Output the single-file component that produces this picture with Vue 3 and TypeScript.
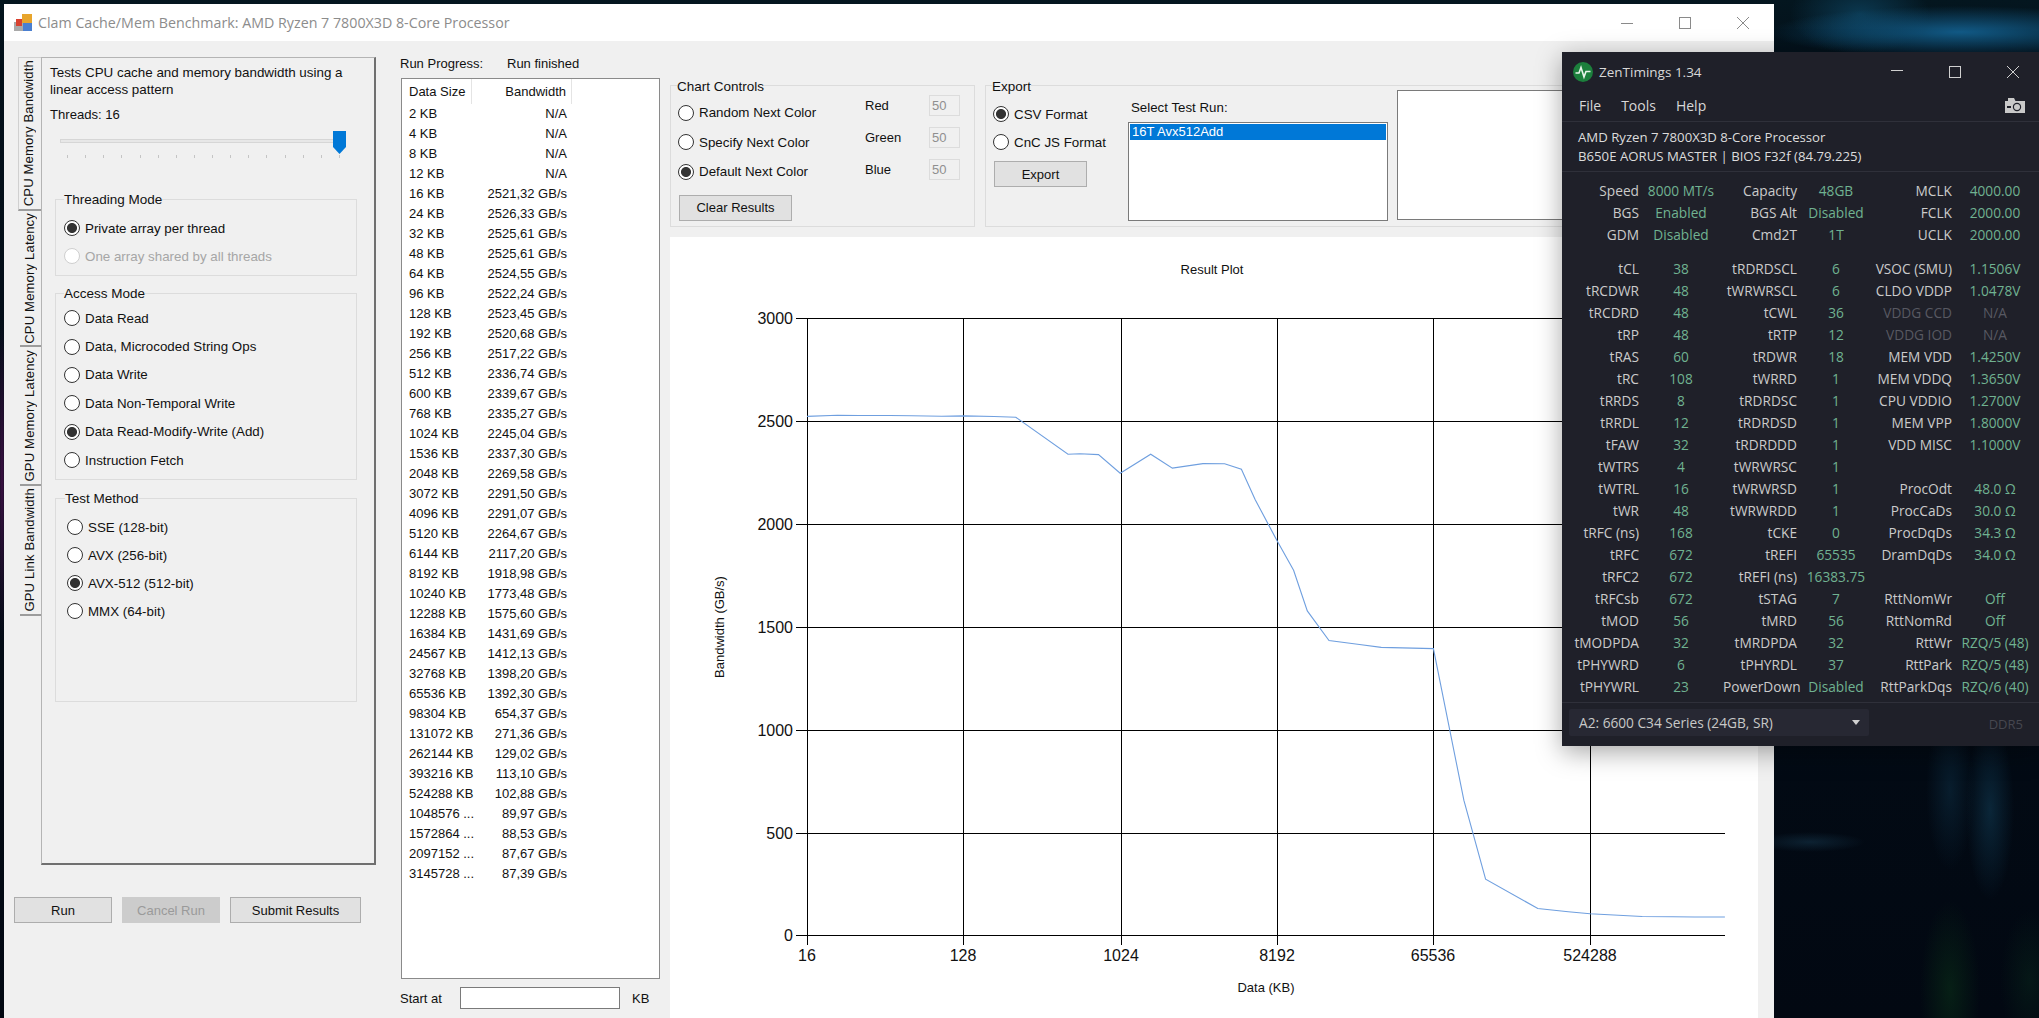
<script setup lang="ts">
import { computed } from 'vue'

interface Row { size: string; bw: string }
interface Option { label: string; on?: boolean; off?: boolean }
type Cell = [string, string, string?]

const tabs: { label: string; active?: boolean; h: number }[] = [
  { label: 'CPU Memory Bandwidth', active: true, h: 154 },
  { label: 'CPU Memory Latency', h: 136 },
  { label: 'GPU Memory Latency', h: 139 },
  { label: 'GPU Link Bandwidth', h: 130 }
]
const threading: Option[] = [
  { label: 'Private array per thread', on: true },
  { label: 'One array shared by all threads', off: true }
]
const access: Option[] = [
  { label: 'Data Read' },
  { label: 'Data, Microcoded String Ops' },
  { label: 'Data Write' },
  { label: 'Data Non-Temporal Write' },
  { label: 'Data Read-Modify-Write (Add)', on: true },
  { label: 'Instruction Fetch' }
]
const methods: Option[] = [
  { label: 'SSE (128-bit)' },
  { label: 'AVX (256-bit)' },
  { label: 'AVX-512 (512-bit)', on: true },
  { label: 'MMX (64-bit)' }
]
const colorModes: Option[] = [
  { label: 'Random Next Color' },
  { label: 'Specify Next Color' },
  { label: 'Default Next Color', on: true }
]
const formats: Option[] = [
  { label: 'CSV Format', on: true },
  { label: 'CnC JS Format' }
]
const channels = ['Red', 'Green', 'Blue']

const raw =
  '2 KB|N/A;4 KB|N/A;8 KB|N/A;12 KB|N/A;16 KB|2521,32;24 KB|2526,33;32 KB|2525,61;48 KB|2525,61;64 KB|2524,55;96 KB|2522,24;128 KB|2523,45;192 KB|2520,68;256 KB|2517,22;512 KB|2336,74;600 KB|2339,67;768 KB|2335,27;1024 KB|2245,04;1536 KB|2337,30;2048 KB|2269,58;3072 KB|2291,50;4096 KB|2291,07;5120 KB|2264,67;6144 KB|2117,20;8192 KB|1918,98;10240 KB|1773,48;12288 KB|1575,60;16384 KB|1431,69;24567 KB|1412,13;32768 KB|1398,20;65536 KB|1392,30;98304 KB|654,37;131072 KB|271,36;262144 KB|129,02;393216 KB|113,10;524288 KB|102,88;1048576 ...|89,97;1572864 ...|88,53;2097152 ...|87,67;3145728 ...|87,39'

const rows: Row[] = raw.split(';').map((r) => {
  const [size, v] = r.split('|')
  return { size, bw: v === 'N/A' ? v : v + ' GB/s' }
})

const X0 = 807
const XSTEP = 52.2
const Y0 = 935
const YSCALE = 0.2057

const points = computed(() =>
  rows
    .filter((r) => r.bw !== 'N/A')
    .map((r) => {
      const x = X0 + Math.log2(parseInt(r.size) / 16) * XSTEP
      const y = Y0 - parseFloat(r.bw.replace(',', '.')) * YSCALE
      return x.toFixed(1) + ',' + y.toFixed(1)
    })
    .join(' ')
)
const yTicks = [
  { label: '3000', y: 318 },
  { label: '2500', y: 421 },
  { label: '2000', y: 524 },
  { label: '1500', y: 627 },
  { label: '1000', y: 730 },
  { label: '500', y: 833 },
  { label: '0', y: 935 }
]
const xTicks = [
  { label: '16', x: 807 },
  { label: '128', x: 963 },
  { label: '1024', x: 1121 },
  { label: '8192', x: 1277 },
  { label: '65536', x: 1433 },
  { label: '524288', x: 1590 }
]

const zt1: Cell[] = [
  ['Speed', '8000 MT/s'], ['Capacity', '48GB'], ['MCLK', '4000.00'],
  ['BGS', 'Enabled'], ['BGS Alt', 'Disabled'], ['FCLK', '2000.00'],
  ['GDM', 'Disabled'], ['Cmd2T', '1T'], ['UCLK', '2000.00']
]
const zt2: Cell[] = [
  ['tCL', '38'], ['tRDRDSCL', '6'], ['VSOC (SMU)', '1.1506V'],
  ['tRCDWR', '48'], ['tWRWRSCL', '6'], ['CLDO VDDP', '1.0478V'],
  ['tRCDRD', '48'], ['tCWL', '36'], ['VDDG CCD', 'N/A', 'dim'],
  ['tRP', '48'], ['tRTP', '12'], ['VDDG IOD', 'N/A', 'dim'],
  ['tRAS', '60'], ['tRDWR', '18'], ['MEM VDD', '1.4250V'],
  ['tRC', '108'], ['tWRRD', '1'], ['MEM VDDQ', '1.3650V'],
  ['tRRDS', '8'], ['tRDRDSC', '1'], ['CPU VDDIO', '1.2700V'],
  ['tRRDL', '12'], ['tRDRDSD', '1'], ['MEM VPP', '1.8000V'],
  ['tFAW', '32'], ['tRDRDDD', '1'], ['VDD MISC', '1.1000V'],
  ['tWTRS', '4'], ['tWRWRSC', '1'], ['', ''],
  ['tWTRL', '16'], ['tWRWRSD', '1'], ['ProcOdt', '48.0 Ω'],
  ['tWR', '48'], ['tWRWRDD', '1'], ['ProcCaDs', '30.0 Ω'],
  ['tRFC (ns)', '168'], ['tCKE', '0'], ['ProcDqDs', '34.3 Ω'],
  ['tRFC', '672'], ['tREFI', '65535'], ['DramDqDs', '34.0 Ω'],
  ['tRFC2', '672'], ['tREFI (ns)', '16383.75'], ['', ''],
  ['tRFCsb', '672'], ['tSTAG', '7'], ['RttNomWr', 'Off'],
  ['tMOD', '56'], ['tMRD', '56'], ['RttNomRd', 'Off'],
  ['tMODPDA', '32'], ['tMRDPDA', '32'], ['RttWr', 'RZQ/5 (48)'],
  ['tPHYWRD', '6'], ['tPHYRDL', '37'], ['RttPark', 'RZQ/5 (48)'],
  ['tPHYWRL', '23'], ['PowerDown', 'Disabled'], ['RttParkDqs', 'RZQ/6 (40)']
]
</script>

<template>
  <div class="desktop">
    <section class="win">
      <header class="titlebar">
        <svg class="appicon" width="18" height="17" viewBox="0 0 18 17">
          <rect x="0" y="8" width="9" height="9" fill="#a9a9a9" />
          <rect x="8" y="0" width="10" height="9" fill="#e8a52c" />
          <rect x="2" y="5" width="6" height="7" fill="#d8412f" />
          <rect x="9" y="9" width="9" height="8" fill="#4a7fd0" />
        </svg>
        <span class="wintitle">Clam Cache/Mem Benchmark: AMD Ryzen 7 7800X3D 8-Core Processor</span>
        <div class="caps">
          <svg width="12" height="12" viewBox="0 0 12 12"><path d="M0 6.5H12" stroke="#8a8a8a" /></svg>
          <svg width="12" height="12" viewBox="0 0 12 12"><rect x=".5" y=".5" width="11" height="11" fill="none" stroke="#8a8a8a" /></svg>
          <svg width="12" height="12" viewBox="0 0 12 12"><path d="M0 0L12 12M12 0L0 12" stroke="#8a8a8a" /></svg>
        </div>
      </header>

      <div class="winbody">
        <div class="leftcol">
          <div class="tabrow">
            <div class="tabstrip">
              <div
                v-for="t in tabs"
                :key="t.label"
                class="tab"
                :class="{ active: t.active }"
                :style="{ height: t.h + 'px' }"
              >
                <span class="tablabel">{{ t.label }}</span>
              </div>
            </div>
            <div class="panel">
              <p class="desc">Tests CPU cache and memory bandwidth using a<br />linear access pattern</p>
              <p class="threads">Threads: 16</p>
              <div class="slider">
                <div class="track"></div>
                <div class="ticks"><i v-for="n in 16" :key="n"></i></div>
                <svg class="thumb" width="13" height="23" viewBox="0 0 13 23"><path d="M0 0H13V16L6.5 23L0 16Z" fill="#0078d7" /></svg>
              </div>

              <div class="group g-thread">
                <span class="legend">Threading Mode</span>
                <label v-for="o in threading" :key="o.label" class="opt" :class="{ off: o.off }">
                  <span class="radio" :class="{ on: o.on }"></span>{{ o.label }}
                </label>
              </div>
              <div class="group g-access">
                <span class="legend">Access Mode</span>
                <label v-for="o in access" :key="o.label" class="opt">
                  <span class="radio" :class="{ on: o.on }"></span>{{ o.label }}
                </label>
              </div>
              <div class="group g-method">
                <span class="legend">Test Method</span>
                <label v-for="o in methods" :key="o.label" class="opt">
                  <span class="radio" :class="{ on: o.on }"></span>{{ o.label }}
                </label>
              </div>
            </div>
          </div>
          <div class="runbtns">
            <button class="btn w98">Run</button>
            <button class="btn w98 disabled">Cancel Run</button>
            <button class="btn w131">Submit Results</button>
          </div>
        </div>

        <div class="midcol">
          <div class="progress"><span class="plabel">Run Progress:</span><span>Run finished</span></div>
          <div class="list">
            <div class="lrow lhead">
              <span class="c1">Data Size</span><span class="c2">Bandwidth</span>
            </div>
            <div v-for="r in rows" :key="r.size" class="lrow">
              <span class="c1">{{ r.size }}</span><span class="c2">{{ r.bw }}</span>
            </div>
          </div>
          <div class="startat">
            <span class="salabel">Start at</span>
            <span class="field"></span>
            <span class="kb">KB</span>
          </div>
        </div>

        <div class="rightcol">
          <div class="controls">
            <div class="group g-chart">
              <span class="legend">Chart Controls</span>
              <div class="cc-body">
                <div class="cc-left">
                  <label v-for="o in colorModes" :key="o.label" class="opt">
                    <span class="radio" :class="{ on: o.on }"></span>{{ o.label }}
                  </label>
                  <button class="btn clear">Clear Results</button>
                </div>
                <div class="cc-right">
                  <template v-for="c in channels" :key="c">
                    <span class="chan">{{ c }}</span>
                    <span class="num">50</span>
                  </template>
                </div>
              </div>
            </div>
            <div class="group g-export">
              <span class="legend">Export</span>
              <div class="ex-body">
                <div class="ex-left">
                  <label v-for="o in formats" :key="o.label" class="opt">
                    <span class="radio" :class="{ on: o.on }"></span>{{ o.label }}
                  </label>
                  <button class="btn export">Export</button>
                </div>
                <div class="ex-mid">
                  <div class="sel-label">Select Test Run:</div>
                  <div class="listbox"><div class="selected">16T Avx512Add</div></div>
                </div>
                <div class="blank"></div>
              </div>
            </div>
          </div>

          <div class="chart">
            <svg width="1088" height="781" viewBox="670 237 1088 781" class="plot">
              <text x="1212" y="274" text-anchor="middle" class="t13">Result Plot</text>
              <g stroke="#000" stroke-width="1" shape-rendering="crispEdges">
                <line v-for="t in yTicks" :key="t.label" x1="796" :y1="t.y + 0.5" x2="1725" :y2="t.y + 0.5" />
                <line v-for="t in xTicks" :key="t.label" :x1="t.x + 0.5" y1="318" :x2="t.x + 0.5" y2="945" />
              </g>
              <polyline :points="points" fill="none" stroke="#6f9fdf" stroke-width="1.1" />
              <text v-for="t in yTicks" :key="t.label" x="793" :y="t.y + 6" text-anchor="end" class="t16">{{ t.label }}</text>
              <text v-for="t in xTicks" :key="t.label" :x="t.x" y="961" text-anchor="middle" class="t16">{{ t.label }}</text>
              <text x="1266" y="992" text-anchor="middle" class="t13">Data (KB)</text>
              <text transform="translate(724 627) rotate(-90)" text-anchor="middle" class="t13">Bandwidth (GB/s)</text>
            </svg>
          </div>
        </div>
      </div>
    </section>

    <section class="zt">
      <header class="zt-title">
        <svg class="zt-logo" width="20" height="20" viewBox="0 0 20 20">
          <circle cx="10" cy="10" r="10" fill="#1c7f3c" />
          <path d="M2.5 11H6L8 5.5L11 15L13 9.5H17.5" fill="none" stroke="#e8f5ea" stroke-width="1.6" />
        </svg>
        <span class="zt-name">ZenTimings 1.34</span>
        <div class="zt-caps">
          <svg width="12" height="12" viewBox="0 0 12 12"><path d="M0 4.5H12" stroke="#d0d0d0" /></svg>
          <svg width="12" height="12" viewBox="0 0 12 12"><rect x=".5" y=".5" width="11" height="11" fill="none" stroke="#d0d0d0" /></svg>
          <svg width="12" height="12" viewBox="0 0 12 12"><path d="M0 0L12 12M12 0L0 12" stroke="#d0d0d0" /></svg>
        </div>
      </header>
      <nav class="zt-menu">
        <span>File</span><span>Tools</span><span>Help</span>
        <svg class="cam" width="20" height="15" viewBox="0 0 20 15">
          <path d="M0 3H3V0H9L10.5 3H20V15H0Z" fill="#c9c9c9" />
          <circle cx="12" cy="9" r="4.2" fill="#1f2029" />
          <circle cx="12" cy="9" r="3" fill="#c9c9c9" />
          <rect x="2" y="8" width="4" height="2" fill="#1f2029" />
        </svg>
      </nav>
      <div class="zt-info">AMD Ryzen 7 7800X3D 8-Core Processor<br />B650E AORUS MASTER | BIOS F32f (84.79.225)</div>
      <div class="zt-data">
        <div class="zt-grid">
          <template v-for="c in zt1" :key="c[0]">
            <span class="k">{{ c[0] }}</span><span class="v">{{ c[1] }}</span>
          </template>
        </div>
        <div class="zt-grid second">
          <template v-for="(c, i) in zt2" :key="i">
            <span class="k" :class="c[2]">{{ c[0] }}</span><span class="v" :class="c[2]">{{ c[1] }}</span>
          </template>
        </div>
      </div>
      <footer class="zt-foot">
        <div class="combo">
          <span>A2: 6600 C34 Series (24GB, SR)</span>
          <svg width="8" height="5" viewBox="0 0 8 5"><path d="M0 0H8L4 5Z" fill="#d0d0d0" /></svg>
        </div>
        <span class="ddr">DDR5</span>
      </footer>
    </section>
  </div>
</template>

<style>
html, body { margin: 0; padding: 0; background: #02060c; overflow: hidden; }
</style>

<style scoped>
.desktop {
  position: relative;
  width: 2039px;
  height: 1018px;
  overflow: hidden;
  font-family: "Liberation Sans", Arial, sans-serif;
  font-size: 13px;
  color: #111;
  background:
    radial-gradient(ellipse 190px 26px at 1960px 32px, #125a86 0%, rgba(18, 90, 134, 0) 100%),
    radial-gradient(ellipse 70px 40px at 1860px 14px, #0b3850 0%, rgba(11, 56, 80, 0) 100%),
    radial-gradient(ellipse 24px 90px at 1990px 810px, rgba(14, 50, 72, .7) 0%, rgba(14, 50, 72, 0) 100%),
    radial-gradient(ellipse 24px 80px at 1950px 790px, rgba(12, 42, 62, .6) 0%, rgba(12, 42, 62, 0) 100%),
    radial-gradient(ellipse 55px 10px at 1810px 842px, rgba(20, 50, 70, .6) 0%, rgba(20, 50, 70, 0) 100%),
    radial-gradient(ellipse 30px 90px at 1950px 990px, rgba(10, 50, 24, .55) 0%, rgba(10, 50, 24, 0) 100%),
    radial-gradient(ellipse 30px 70px at 2030px 980px, rgba(10, 46, 30, .4) 0%, rgba(10, 46, 30, 0) 100%),
    radial-gradient(ellipse 5px 160px at 2px 480px, #3a1042 0%, rgba(58, 16, 66, 0) 100%),
    linear-gradient(180deg, #04161f 0, #03101a 60px, #020812 100%);
}
.win {
  position: absolute;
  left: 4px;
  top: 4px;
  width: 1770px;
  height: 1014px;
  background: #f0f0f0;
  display: flex;
  flex-direction: column;
}
.titlebar {
  height: 37px;
  flex: none;
  background: #fff;
  display: flex;
  align-items: center;
  padding: 0 25px 0 10px;
}
.appicon { flex: none; }
.wintitle {
  margin-left: 6px;
  font-family: "Open Sans", sans-serif;
  font-size: 14.25px;
  color: #8c8c8c;
}
.caps { margin-left: auto; display: flex; gap: 46px; }
.winbody { flex: 1; display: flex; min-height: 0; padding-left: 10px; }

/* left column */
.leftcol { width: 362px; flex: none; padding-top: 16px; }
.tabrow { display: flex; height: 808px; margin-left: 4px; }
.tabstrip { width: 23px; flex: none; display: flex; flex-direction: column; }
.tab {
  box-sizing: border-box;
  margin-left: 2px;
  padding-right: 2px;
  border-bottom: 2px solid #9c9c9c;
  display: flex;
  justify-content: center;
  align-items: center;
}
.tab.active { margin-left: 0; padding-right: 3px; border-top: 1px solid #d0d0d0; border-left: 1px solid #d0d0d0; }
.tablabel {
  writing-mode: vertical-rl;
  transform: rotate(180deg);
  white-space: nowrap;
  letter-spacing: .2px;
}
.panel {
  box-sizing: border-box;
  width: 335px;
  border-top: 1px solid #b4b4b4;
  border-left: 1px solid #b4b4b4;
  border-right: 2px solid #6f6f6f;
  border-bottom: 2px solid #6f6f6f;
  padding: 6px 0 0 13px;
}
.desc { margin: 0 0 0 -5px; line-height: 17px; font-size: 13.4px; }
.threads { margin: 8px 0 0 -5px; line-height: 17px; font-size: 13.1px; }
.slider { position: relative; padding-top: 8px; margin: 8px 0 0 5px; width: 286px; }
.track { height: 4px; width: 280px; background: #e7e7e7; box-sizing: border-box; border: 1px solid #d6d6d6; }
.ticks { margin: 12px 0 0 7px; width: 273px; height: 3px; display: flex; justify-content: space-between; }
.ticks i { width: 1px; background: #c4c4c4; display: block; }
.thumb { position: absolute; left: 273px; top: 0; }

.group { box-sizing: border-box; border: 1px solid #dcdcdc; }
.legend {
  display: block;
  width: fit-content;
  height: 17px;
  line-height: 17px;
  margin: -9px 0 0 6px;
  background: #f0f0f0;
  font-size: 13.5px;
}
.g-chart .legend, .g-export .legend { line-height: 19px; }
.opt { display: flex; align-items: center; height: 28px; white-space: nowrap; font-size: 13.35px; }
.opt.off { color: #a6a6a6; }
.radio {
  box-sizing: border-box;
  width: 16px;
  height: 16px;
  flex: none;
  border: 1px solid #333;
  border-radius: 50%;
  background: #fff;
  margin-right: 5px;
}
.radio.on { background: radial-gradient(circle, #333 0, #333 4.6px, #fff 5.4px); }
.opt.off .radio { border-color: #cfcfcf; }

.g-thread { width: 302px; height: 77px; margin-top: 41px; padding: 0 0 0 8px; }
.g-thread .legend, .g-access .legend, .g-method .legend { margin-left: 0; }
.g-thread .opt:first-of-type { margin-top: 6px; }
.g-access { width: 302px; height: 187px; margin-top: 17px; padding-left: 8px; }
.g-access .opt { height: 28.4px; }
.g-access .opt:first-of-type { margin-top: 2px; }
.g-method { width: 302px; height: 204px; margin-top: 18px; padding-left: 11px; }
.g-method .legend { margin-left: -2px; }
.g-method .opt:first-of-type { margin-top: 6px; }

.btn {
  box-sizing: border-box;
  height: 26px;
  padding: 0;
  border: 1px solid #adadad;
  background: #e1e1e1;
  color: #111;
  font: inherit;
  display: block;
}
.btn.disabled { background: #cccccc; border-color: #cccccc; color: #9a9a9a; }
.runbtns { display: flex; gap: 10px; margin-top: 32px; }
.w98 { width: 98px; }
.w131 { width: 131px; }

/* middle column */
.midcol { width: 260px; margin-left: 24px; flex: none; padding-top: 14px; }
.progress { height: 18px; line-height: 18px; display: flex; }
.plabel { width: 107px; }
.list {
  box-sizing: border-box;
  margin: 5px 0 0 1px;
  width: 259px;
  height: 901px;
  background: #fff;
  border: 1px solid #8a8a8a;
}
.lrow { display: flex; height: 20px; line-height: 20px; }
.lhead { height: 25px; line-height: 25px; }
.c1 { box-sizing: border-box; width: 70px; padding-left: 7px; white-space: nowrap; }
.c2 { box-sizing: border-box; width: 100px; text-align: right; padding-right: 5px; }
.lhead .c1, .lhead .c2 { border-right: 1px solid #e4e4e4; }
.startat { display: flex; align-items: center; margin-top: 8px; }
.salabel { width: 60px; }
.field { box-sizing: border-box; width: 160px; height: 22px; background: #fff; border: 1px solid #7a7a7a; }
.kb { margin-left: 12px; }

/* right column */
.rightcol { margin-left: 10px; width: 1104px; flex: none; padding-top: 44px; }
.controls { display: flex; gap: 10px; height: 142px; }
.g-chart { width: 305px; height: 142px; }
.cc-body { display: flex; padding-left: 7px; }
.cc-left { width: 187px; padding-top: 4px; flex: none; }
.cc-left .opt { height: 29.5px; }
.clear { width: 113px; margin: 8px 0 0 1px; }
.cc-right { display: grid; grid-template-columns: 64px 31px; grid-auto-rows: 21px; row-gap: 11px; margin-top: 1px; align-items: center; }
.num {
  box-sizing: border-box;
  height: 21px;
  line-height: 19px;
  border: 1px solid #dcdcdc;
  padding-left: 2px;
  color: #8f8f8f;
  background: #f0f0f0;
}
.g-export { width: 789px; height: 142px; }
.ex-body { display: flex; padding-left: 7px; }
.ex-left { width: 135px; flex: none; padding-top: 6px; }
.export { width: 93px; margin: 5px 0 0 1px; }
.ex-mid { width: 260px; flex: none; }
.sel-label { padding: 5px 0 0 3px; height: 28px; box-sizing: border-box; line-height: 17px; font-size: 13.3px; }
.listbox { box-sizing: border-box; height: 99px; background: #fff; border: 1px solid #7a7a7a; padding: 1px; }
.selected { height: 16px; line-height: 16px; background: #0078d7; color: #fff; padding-left: 2px; }
.blank { box-sizing: border-box; margin: -4px 0 0 9px; width: 300px; height: 130px; background: #fff; border: 1px solid #7a7a7a; }
.chart { margin-top: 10px; width: 1088px; height: 781px; background: #fff; }
.plot { display: block; }
.t13 { font-size: 13px; fill: #111; }
.t16 { font-size: 16px; fill: #111; }

/* ZenTimings */
.zt {
  position: absolute;
  left: 1562px;
  top: 52px;
  width: 477px;
  height: 694px;
  background: #1f2029;
  box-shadow: 0 6px 24px rgba(0, 0, 0, .35);
  color: #d4d4d4;
  font-family: "Open Sans", sans-serif;
  font-size: 13px;
  display: flex;
  flex-direction: column;
}
.zt-title { height: 40px; flex: none; display: flex; align-items: center; padding: 0 20px 0 11px; box-sizing: border-box; }
.zt-name { margin-left: 6px; font-size: 13.5px; color: #d8d8d8; }
.zt-caps { margin-left: auto; display: flex; gap: 46px; }
.zt-menu {
  height: 30px;
  flex: none;
  box-sizing: border-box;
  border-bottom: 1px solid #2f303a;
  display: flex;
  align-items: center;
  gap: 20px;
  padding: 0 14px 3px 17px;
  font-size: 14px;
  color: #d8d8d8;
}
.cam { margin-left: auto; }
.zt-info {
  box-sizing: border-box;
  height: 50px;
  flex: none;
  padding: 6px 0 0 16px;
  line-height: 19px;
  border-bottom: 1px solid #2f303a;
  color: #dcdcdc;
  font-size: 13.2px;
}
.zt-data { padding: 8px 0 4px; flex: none; border-bottom: 1px solid #2f303a; }
.zt-grid {
  display: grid;
  grid-template-columns: 77px 84px 74px 78px 77px 86px;
  grid-auto-rows: 22px;
  line-height: 22px;
  font-size: 13.7px;
}
.zt-grid.second { margin-top: 12px; }
.k { text-align: right; color: #cbcbcb; white-space: nowrap; }
.v { text-align: center; color: #70b291; white-space: nowrap; }
.k.dim, .v.dim { color: #585962; }
.zt-foot { flex: 1; display: flex; align-items: flex-start; padding: 6px 16px 0 7px; }
.combo {
  box-sizing: border-box;
  width: 300px;
  height: 27px;
  background: #272833;
  border-radius: 2px;
  display: flex;
  align-items: center;
  justify-content: space-between;
  padding: 0 9px 0 10px;
  color: #c8c8c8;
  font-size: 13.7px;
}
.ddr { margin-left: auto; line-height: 30px; color: #46474f; }
</style>
